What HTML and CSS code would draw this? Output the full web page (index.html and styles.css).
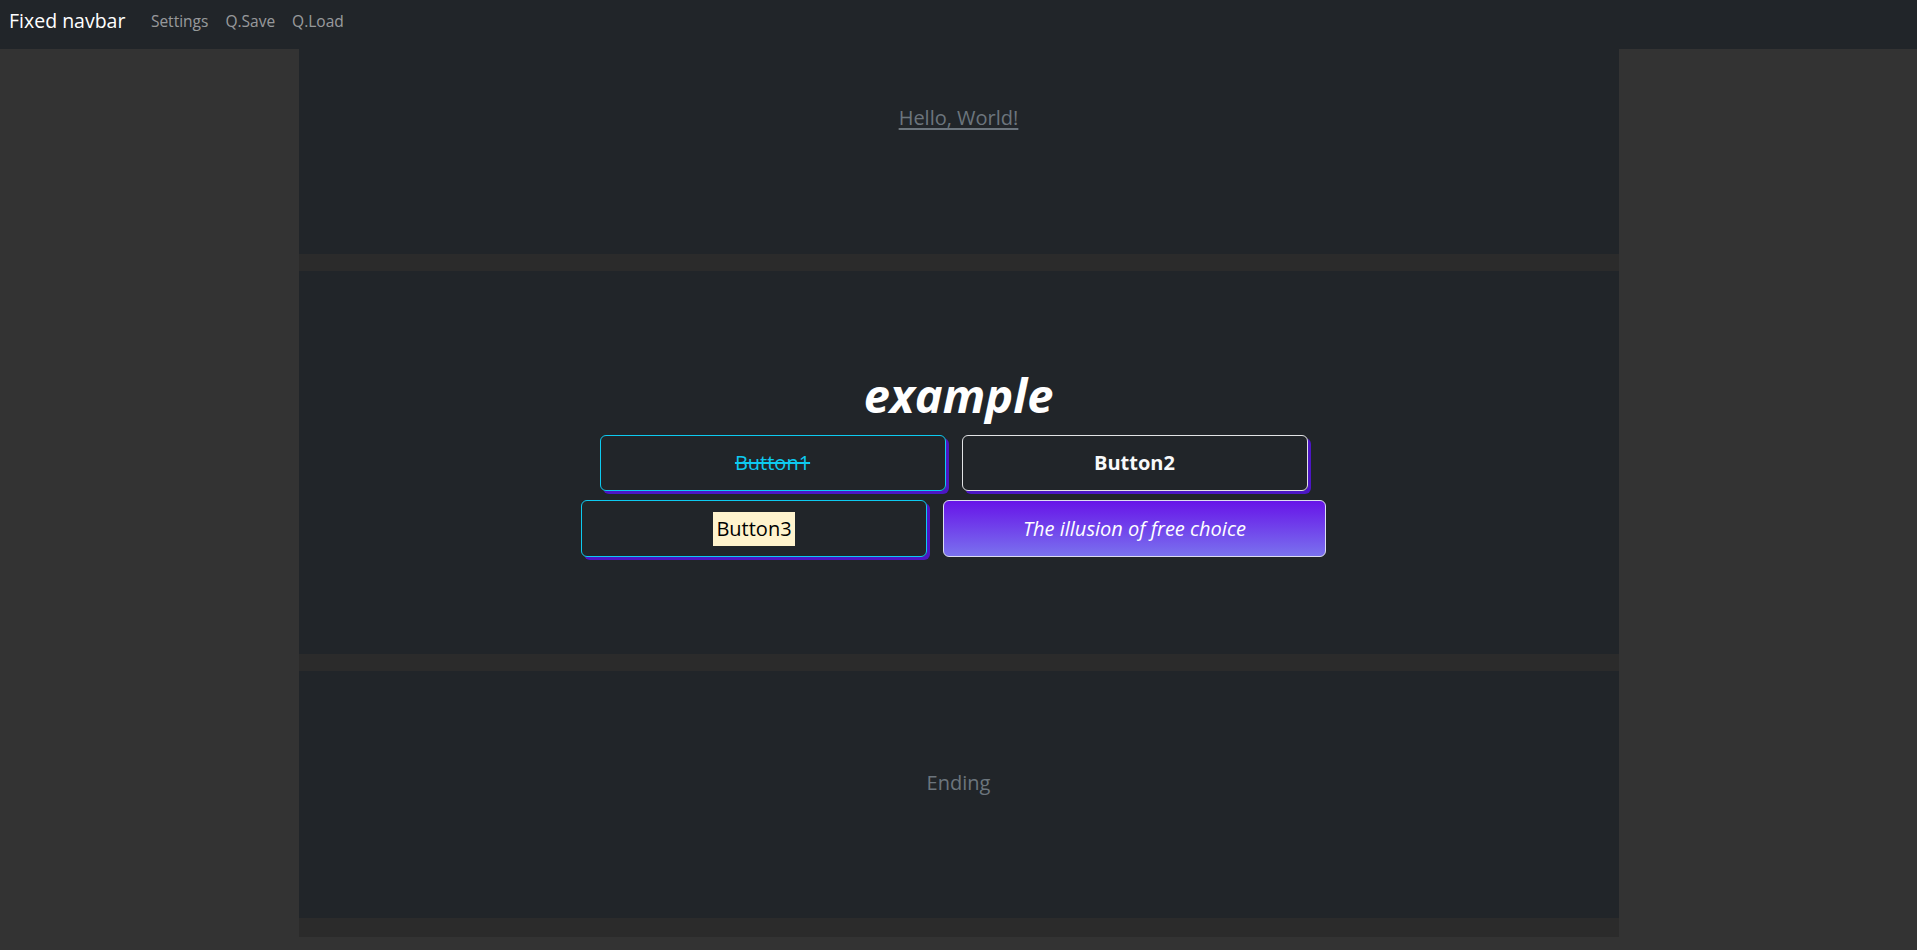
FILE: index.html
```html
<!DOCTYPE html>
<html lang="en">
<head>
<meta charset="utf-8">
<title>Fixed navbar</title>
<link rel="stylesheet" href="styles.css">
</head>
<body>
<nav class="navbar">
  <a class="brand" href="#">Fixed navbar</a>
  <a class="nav-link" href="#">Settings</a>
  <a class="nav-link" href="#">Q.Save</a>
  <a class="nav-link" href="#">Q.Load</a>
</nav>
<main class="container">
  <section class="panel panel-intro">
    <a class="hello" href="#">Hello, World!</a>
  </section>
  <section class="panel panel-main">
    <h1 class="title">example</h1>
    <div class="btn-group">
      <div class="btn-row">
        <button class="btn btn-info btn-shadow"><s>Button1</s></button>
        <button class="btn btn-light btn-shadow"><b>Button2</b></button>
      </div>
      <div class="btn-row row-2">
        <button class="btn btn-info btn-shadow"><mark>Button3</mark></button>
        <button class="btn btn-grad"><i>The illusion of free choice</i></button>
      </div>
    </div>
  </section>
  <section class="panel panel-end">
    <p class="ending">Ending</p>
  </section>
</main>
</body>
</html>
```

FILE: styles.css
```css
html, body {
  margin: 0;
  padding: 0;
}
body {
  background: #333333;
  font-family: "Open Sans", "Noto Sans", sans-serif;
  color: #fff;
  height: 950px;
  overflow: hidden;
}
.navbar {
  height: 49px;
  background: #212529;
  display: flex;
  align-items: center;
  padding: 0 0 7px 9px;
  box-sizing: border-box;
}
.brand {
  color: #fff;
  text-decoration: none;
  font-size: 19.5px;
  line-height: 30px;
  margin-right: 17px;
}
.nav-link {
  color: rgba(255, 255, 255, 0.55);
  text-decoration: none;
  font-size: 15.5px;
  line-height: 24px;
  padding: 0 8.5px;
}
.container {
  width: 1320px;
  margin: 0 auto;
  background: #2b2b2b;
  display: flex;
  flex-direction: column;
  gap: 17px;
  padding-bottom: 19px;
}
.panel {
  background: #212529;
  box-sizing: border-box;
  text-align: center;
}
.panel-intro {
  height: 205px;
  padding-top: 54px;
}
.hello {
  color: #6c757d;
  font-size: 20px;
  line-height: 30px;
  text-decoration: underline;
  text-decoration-thickness: 2px;
  text-underline-offset: 3px;
}
.panel-main {
  height: 383px;
  padding-top: 95px;
  display: flex;
  flex-direction: column;
  align-items: center;
}
.title {
  margin: 0 0 11px;
  font-size: 47px;
  line-height: 58px;
  font-weight: 700;
  font-style: italic;
  color: #fff;
}
.btn-group {
  display: flex;
  flex-direction: column;
  gap: 9px;
  padding-right: 10px;
}
.btn-row {
  display: flex;
  justify-content: center;
  gap: 16px;
}
.btn {
  width: 346px;
  height: 56px;
  box-sizing: border-box;
  border: 1px solid;
  border-radius: 6px;
  background: transparent;
  font-family: inherit;
  font-size: 20px;
  line-height: 30px;
  color: #fff;
  padding: 0;
  display: flex;
  align-items: center;
  justify-content: center;
}
.row-2 .btn {
  height: 57px;
}
.btn-shadow {
  box-shadow: 3px 3px 0 #4c16c4;
}
.btn-info {
  border-color: #0dcaf0;
  color: #0dcaf0;
}
.btn-light {
  border-color: #e2e3e5;
  color: #f8f9fa;
}
.btn-grad {
  width: 383px;
  border-color: #dcdcf0;
  background: linear-gradient(180deg, #6714e8 0%, #7a72ee 100%);
  color: #fff;
}
mark {
  background: #fff3cd;
  color: #000;
  padding: 2px 3.5px;
}
.panel-end {
  height: 247px;
  padding-top: 97px;
}
.ending {
  margin: 0;
  color: #6c757d;
  font-size: 20px;
  line-height: 30px;
}
```
